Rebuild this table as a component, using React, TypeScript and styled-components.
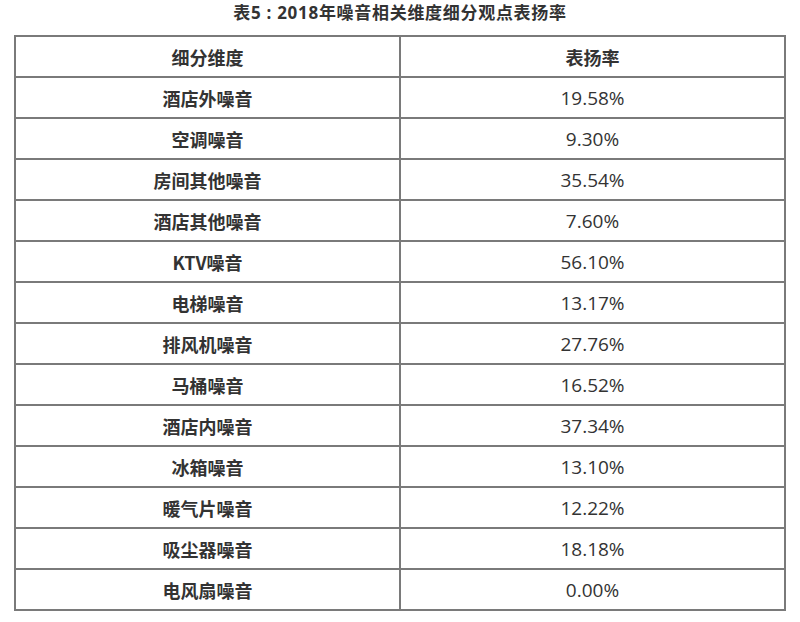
import React from "react";
import styled, { createGlobalStyle } from "styled-components";

const Global = createGlobalStyle`
  html, body { margin: 0; padding: 0; background: #fff; }
  body { font-family: "Open Sans", "Noto Sans CJK SC", sans-serif; color: #333; }
`;

const Page = styled.div`
  width: 800px;
  display: flex;
  flex-direction: column;
  align-items: center;
`;

const Title = styled.div`
  height: 35px;
  line-height: 26px;
  font-family: "Open Sans", "Noto Sans CJK SC", sans-serif;
  font-weight: 700;
  font-size: 17px;
  letter-spacing: 0.7px;
  color: #333;
  text-align: center;
  white-space: pre;
`;

const Table = styled.table`
  width: 772px;
  border-collapse: collapse;
  table-layout: fixed;
  border: 2px solid #7a7a7a;
`;

const Cell = styled.td<{ $label?: boolean }>`
  height: 39px;
  padding: 0;
  border: 2px solid #7a7a7a;
  text-align: center;
  vertical-align: middle;
  font-size: ${(p) => (p.$label ? "18px" : "19px")};
  font-family: ${(p) =>
    p.$label
      ? `"Noto Sans CJK SC", sans-serif`
      : `"Open Sans", "Noto Sans CJK SC", sans-serif`};
  font-weight: ${(p) => (p.$label ? 700 : 400)};
  color: #333;
`;

const HeadCell = styled.th`
  height: 39px;
  padding: 0;
  border: 2px solid #7a7a7a;
  text-align: center;
  vertical-align: middle;
  font-size: 18px;
  font-family: "Noto Sans CJK SC", sans-serif;
  font-weight: 700;
  color: #333;
`;

const rows: [string, string][] = [
  ["酒店外噪音", "19.58%"],
  ["空调噪音", "9.30%"],
  ["房间其他噪音", "35.54%"],
  ["酒店其他噪音", "7.60%"],
  ["KTV噪音", "56.10%"],
  ["电梯噪音", "13.17%"],
  ["排风机噪音", "27.76%"],
  ["马桶噪音", "16.52%"],
  ["酒店内噪音", "37.34%"],
  ["冰箱噪音", "13.10%"],
  ["暖气片噪音", "12.22%"],
  ["吸尘器噪音", "18.18%"],
  ["电风扇噪音", "0.00%"],
];

export default function App() {
  return (
    <Page>
      <Global />
      <Title>表5 : 2018年噪音相关维度细分观点表扬率</Title>
      <Table>
        <colgroup>
          <col style={{ width: "50%" }} />
          <col style={{ width: "50%" }} />
        </colgroup>
        <thead>
          <tr>
            <HeadCell>细分维度</HeadCell>
            <HeadCell>表扬率</HeadCell>
          </tr>
        </thead>
        <tbody>
          {rows.map(([k, v]) => (
            <tr key={k}>
              <Cell $label>{k}</Cell>
              <Cell>{v}</Cell>
            </tr>
          ))}
        </tbody>
      </Table>
    </Page>
  );
}
